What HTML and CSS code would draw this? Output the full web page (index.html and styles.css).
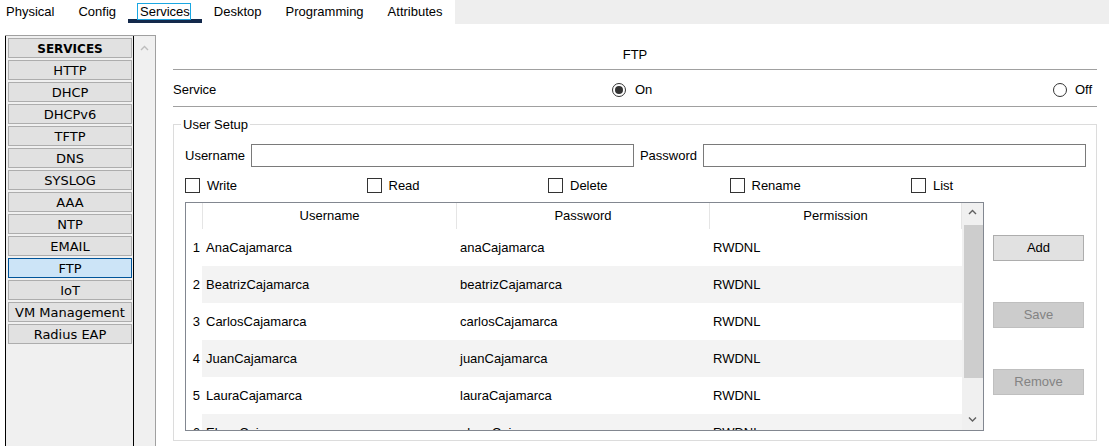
FILE: index.html
```html
<!DOCTYPE html>
<html>
<head>
<meta charset="utf-8">
<title>FTP Services</title>
<link rel="stylesheet" href="styles.css">
</head>
<body>
<div class="tabbar">
  <div class="tabs">
    <div class="tab first">Physical</div>
    <div class="tab">Config</div>
    <div class="tab active"><span class="focus">Services</span></div>
    <div class="tab">Desktop</div>
    <div class="tab">Programming</div>
    <div class="tab">Attributes</div>
  </div>
  <div class="tabfill"></div>
</div>
<div class="workspace">
  <aside class="sidebar">
    <div class="svc-list">
      <div class="svc head">SERVICES</div>
      <div class="svc">HTTP</div>
      <div class="svc">DHCP</div>
      <div class="svc">DHCPv6</div>
      <div class="svc">TFTP</div>
      <div class="svc">DNS</div>
      <div class="svc">SYSLOG</div>
      <div class="svc">AAA</div>
      <div class="svc">NTP</div>
      <div class="svc">EMAIL</div>
      <div class="svc selected">FTP</div>
      <div class="svc">IoT</div>
      <div class="svc">VM Management</div>
      <div class="svc">Radius EAP</div>
    </div>
    <div class="side-scroll">
      <svg class="chev" width="21" height="22" viewBox="0 0 21 22"><polyline points="7,14 10.5,10.5 14,14" fill="none" stroke="#bdbdbd" stroke-width="1.4"/></svg>
    </div>
  </aside>
  <main class="content">
    <div class="title">FTP</div>
    <div class="service-row">
      <span>Service</span>
      <span class="radio-opt"><span class="radio checked"></span>On</span>
      <span class="radio-opt off"><span class="radio"></span>Off</span>
    </div>
    <fieldset class="setup">
      <legend>User Setup</legend>
      <div class="setup-body">
        <div class="cred-row">
          <span>Username</span>
          <div class="input"></div>
          <span>Password</span>
          <div class="input"></div>
        </div>
        <div class="perm-row">
          <span class="check"><span class="box"></span>Write</span>
          <span class="check"><span class="box"></span>Read</span>
          <span class="check"><span class="box"></span>Delete</span>
          <span class="check"><span class="box"></span>Rename</span>
          <span class="check"><span class="box"></span>List</span>
        </div>
        <div class="table-area">
          <div class="grid">
            <div class="grid-body">
              <div class="row header">
                <div class="num"></div>
                <div class="hcell">Username</div>
                <div class="hcell">Password</div>
                <div class="hcell last">Permission</div>
              </div>
              <div class="row">
                <div class="num">1</div><div class="cell">AnaCajamarca</div><div class="cell">anaCajamarca</div><div class="cell">RWDNL</div>
              </div>
              <div class="row alt">
                <div class="num">2</div><div class="cell">BeatrizCajamarca</div><div class="cell">beatrizCajamarca</div><div class="cell">RWDNL</div>
              </div>
              <div class="row">
                <div class="num">3</div><div class="cell">CarlosCajamarca</div><div class="cell">carlosCajamarca</div><div class="cell">RWDNL</div>
              </div>
              <div class="row alt">
                <div class="num">4</div><div class="cell">JuanCajamarca</div><div class="cell">juanCajamarca</div><div class="cell">RWDNL</div>
              </div>
              <div class="row">
                <div class="num">5</div><div class="cell">LauraCajamarca</div><div class="cell">lauraCajamarca</div><div class="cell">RWDNL</div>
              </div>
              <div class="row alt">
                <div class="num">6</div><div class="cell">ElenaCajamarca</div><div class="cell">elenaCajamarca</div><div class="cell">RWDNL</div>
              </div>
            </div>
            <div class="grid-scroll">
              <svg width="21" height="22" viewBox="0 0 21 22"><polyline points="7,11 10.5,7.5 14,11" fill="none" stroke="#606060" stroke-width="1.4"/></svg>
              <div class="thumb"></div>
              <div class="track"></div>
              <svg width="21" height="22" viewBox="0 0 21 22"><polyline points="7,9.5 10.5,13 14,9.5" fill="none" stroke="#606060" stroke-width="1.4"/></svg>
            </div>
          </div>
          <div class="actions">
            <div class="btn">Add</div>
            <div class="btn disabled">Save</div>
            <div class="btn disabled">Remove</div>
          </div>
        </div>
      </div>
    </fieldset>
  </main>
</div>
</body>
</html>
```

FILE: styles.css
```css
* { box-sizing: border-box; }

html, body {
  margin: 0;
  padding: 0;
}

body {
  width: 1109px;
  height: 446px;
  overflow: hidden;
  background: #ffffff;
  color: #000000;
  font-family: "Liberation Sans", Arial, sans-serif;
  font-size: 13px;
}

/* ---------- top tabs ---------- */
.tabbar {
  display: flex;
  height: 24px;
}

.tabs {
  display: flex;
  background: #ffffff;
}

.tab {
  padding: 4px 12px 0;
  line-height: 15px;
  height: 23px;
  border-bottom: 4px solid transparent;
  white-space: nowrap;
}

.tab.first { padding-left: 6px; }

.tab.active { border-bottom-color: #13294b; }

.focus {
  outline: 1px solid #1aa7e2;
  padding-left: 2px;
  margin-left: -2px;
}

.tabfill {
  flex: 1;
  background: #eeeeee;
}

/* ---------- workspace ---------- */
.workspace {
  display: flex;
  height: 422px;
}

.sidebar {
  display: flex;
  flex: none;
  width: 151px;
  height: 430px;
  margin: 11px 0 0 5px;
  border-top: 1px solid #a0a0a0;
  border-right: 1px solid #a0a0a0;
  background: #f0f0f0;
}

.svc-list {
  width: 129px;
  border-left: 1px solid #000000;
  border-right: 1px solid #000000;
  padding: 2px 1px 0 2px;
  display: flex;
  flex-direction: column;
  gap: 2px;
}

.svc {
  height: 20px;
  border: 1px solid #adadad;
  background: #e1e1e1;
  font-family: "DejaVu Sans", Verdana, sans-serif;
  font-size: 13px;
  line-height: 20px;
  text-align: center;
  white-space: nowrap;
  overflow: visible;
}

.svc.head {
  font-weight: bold;
  font-size: 12px;
}

.svc.selected {
  background: #cce4f7;
  border-color: #005499;
}

.side-scroll {
  width: 21px;
}

.chev { display: block; }

/* ---------- content ---------- */
.content {
  flex: 1;
  padding: 0 12px 0 17px;
}

.title {
  text-align: center;
  line-height: 15px;
  padding: 23px 0 7px;
  border-bottom: 1px solid #a0a0a0;
}

.service-row {
  display: grid;
  grid-template-columns: 439px 1fr auto;
  align-items: center;
  line-height: 15px;
  padding: 12px 5px 9px 0;
  border-bottom: 1px solid #a0a0a0;
}

.radio-opt {
  display: flex;
  align-items: center;
}

.radio {
  width: 14px;
  height: 14px;
  border: 1px solid #333333;
  border-radius: 50%;
  background: #ffffff;
  margin-right: 9px;
  display: flex;
  align-items: center;
  justify-content: center;
}

.radio.checked::after {
  content: "";
  width: 8px;
  height: 8px;
  border-radius: 50%;
  background: #333333;
}

.radio-opt.off .radio { margin-right: 8px; }

/* ---------- user setup ---------- */
.setup {
  margin: 10px 0 0;
  padding: 0;
  border: 1px solid #dcdcdc;
  min-width: 0;
}

.setup legend {
  margin-left: 7px;
  padding: 0 2px;
  line-height: 15px;
}

.setup-body {
  padding: 0 10px 9px 11px;
}

.cred-row {
  display: grid;
  grid-template-columns: auto 1fr auto 1fr;
  column-gap: 6px;
  align-items: center;
  margin-top: 12px;
}

.input {
  height: 23px;
  border: 1px solid #7a7a7a;
  background: #ffffff;
}

.perm-row {
  display: grid;
  grid-template-columns: repeat(4, 181.5px) 1fr;
  margin-top: 11px;
  line-height: 15px;
}

.check {
  display: flex;
  align-items: center;
}

.box {
  width: 15px;
  height: 15px;
  border: 1px solid #333333;
  background: #ffffff;
  margin-right: 7px;
}

/* ---------- table ---------- */
.table-area {
  display: flex;
  margin-top: 9px;
}

.grid {
  flex: none;
  display: flex;
  width: 799px;
  height: 229px;
  border: 1px solid #828790;
  overflow: hidden;
}

.grid-body {
  width: 776px;
  overflow: hidden;
}

.row {
  display: grid;
  grid-template-columns: 16px 254px 253px 253px;
  height: 37px;
  align-items: center;
}

.row.header {
  height: 26px;
  align-items: stretch;
}

.hcell {
  border-left: 1px solid #e5e5e5;
  text-align: center;
  line-height: 25px;
}

.hcell.last { border-right: 1px solid #e5e5e5; }

.num {
  padding-right: 2px;
  background: #ffffff;
  align-self: stretch;
  display: flex;
  align-items: center;
  justify-content: flex-end;
}

.cell {
  padding-left: 4px;
  align-self: stretch;
  display: flex;
  align-items: center;
  white-space: nowrap;
}

.row.alt .cell { background: #f3f3f3; }

.grid-scroll {
  width: 21px;
  background: #f0f0f0;
  display: flex;
  flex-direction: column;
}

.grid-scroll svg { display: block; flex: none; }

.thumb {
  height: 153px;
  margin-left: 2px;
  width: 19px;
  background: #cdcdcd;
  flex: none;
}

.track { flex: 1; }

/* ---------- buttons ---------- */
.actions {
  width: 91px;
  margin-left: 9px;
  padding-top: 33px;
  display: flex;
  flex-direction: column;
  gap: 41px;
}

.btn {
  height: 26px;
  border: 1px solid #adadad;
  background: #e1e1e1;
  text-align: center;
  line-height: 24px;
}

.btn.disabled {
  background: #cccccc;
  border-color: #bfbfbf;
  color: #838383;
}
```
